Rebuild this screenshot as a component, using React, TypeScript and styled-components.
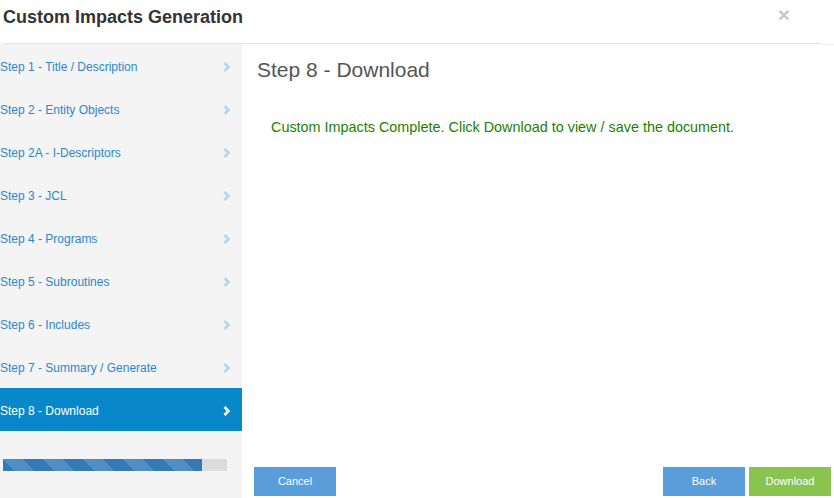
import React from "react";
import styled, { createGlobalStyle } from "styled-components";

const Global = createGlobalStyle`
  html, body { margin: 0; padding: 0; background: #fff; }
  body { font-family: "Liberation Sans", Arial, sans-serif; }
  * { box-sizing: border-box; }
`;

const Modal = styled.div`
  width: 834px;
  height: 498px;
  display: flex;
  flex-direction: column;
  background: #fff;
  overflow: hidden;
`;

const Header = styled.div`
  height: 44px;
  display: flex;
  align-items: flex-start;
  justify-content: space-between;
  position: relative;
  &::before {
    content: "";
    position: absolute;
    left: 3px;
    right: 13px;
    top: 43px;
    height: 1px;
    background: #e2e2e2;
  }
  &::after {
    content: "";
    position: absolute;
    left: 821px;
    right: 0;
    top: 44px;
    height: 1px;
    background: #eeeeee;
  }
`;

const Title = styled.h1`
  margin: 0;
  padding: 6px 0 0 3px;
  font-size: 18px;
  line-height: 22px;
  font-weight: bold;
  color: #333;
`;

const Close = styled.span`
  margin: 4px 44px 0 0;
  font-size: 21px;
  line-height: 21px;
  font-weight: bold;
  color: #c8c8c8;
`;

const Body = styled.div`
  flex: 1;
  display: flex;
  min-height: 0;
`;

const Sidebar = styled.nav`
  width: 242px;
  background: #f4f4f4;
  display: flex;
  flex-direction: column;
`;

const StepItem = styled.div<{ $active?: boolean }>`
  height: 43px;
  display: flex;
  align-items: center;
  justify-content: space-between;
  padding: 2px 11px 0 0;
  font-size: 12px;
  color: ${(p) => (p.$active ? "#fff" : "#2a87cf")};
  background: ${(p) => (p.$active ? "#0888cb" : "transparent")};
`;

const Chevron = styled.svg<{ $active?: boolean }>`
  width: 8px;
  height: 10px;
  color: ${(p) => (p.$active ? "#ffffff" : "#b0d6ee")};
`;

const Progress = styled.div`
  margin: 28px 15px 0 3px;
  height: 12px;
  background: #dcdcdc;
`;

const ProgressFill = styled.div`
  height: 100%;
  background-color: #337ab7;
  background-image: linear-gradient(
    45deg,
    rgba(255, 255, 255, 0.15) 25%,
    transparent 25%,
    transparent 50%,
    rgba(255, 255, 255, 0.15) 50%,
    rgba(255, 255, 255, 0.15) 75%,
    transparent 75%,
    transparent
  );
  background-size: 40px 40px;
`;

const Main = styled.section`
  flex: 1;
  display: flex;
  flex-direction: column;
  padding: 14px 3px 2px 12px;
`;

const Heading = styled.h2`
  margin: 0 0 0 3px;
  font-size: 21px;
  line-height: 24px;
  font-weight: normal;
  color: #555;
`;

const Message = styled.p`
  margin: 36px 0 0 17px;
  font-size: 14.4px;
  line-height: 18px;
  color: #1c7f00;
`;

const Footer = styled.div`
  margin-top: auto;
  display: flex;
  gap: 4px;
`;

const Button = styled.button<{ $variant?: "primary" | "success" }>`
  width: 82px;
  height: 29px;
  border: none;
  padding: 0 0 2px;
  font-family: "Liberation Sans", Arial, sans-serif;
  font-size: 11px;
  color: #fff;
  background: ${(p) => (p.$variant === "success" ? "#8bc34f" : "#599ddb")};
  cursor: pointer;
`;

const Spacer = styled.div`
  flex: 1;
`;

const steps = [
  "Step 1 - Title / Description",
  "Step 2 - Entity Objects",
  "Step 2A - I-Descriptors",
  "Step 3 - JCL",
  "Step 4 - Programs",
  "Step 5 - Subroutines",
  "Step 6 - Includes",
  "Step 7 - Summary / Generate",
  "Step 8 - Download",
];

export default function App() {
  const progress = 89;
  return (
    <>
      <Global />
      <Modal>
        <Header>
          <Title>Custom Impacts Generation</Title>
          <Close>×</Close>
        </Header>
        <Body>
          <Sidebar>
            {steps.map((s, i) => {
              const active = i === steps.length - 1;
              return (
                <StepItem key={s} $active={active}>
                  <span>{s}</span>
                  <Chevron $active={active} viewBox="0 0 8 10">
                    <path d="M1.5 1 L5.5 5 L1.5 9" fill="none" stroke="currentColor" strokeWidth="2.6" strokeLinejoin="miter" />
                  </Chevron>
                </StepItem>
              );
            })}
            <Progress>
              <ProgressFill style={{ width: `${progress}%` }} />
            </Progress>
          </Sidebar>
          <Main>
            <Heading>Step 8 - Download</Heading>
            <Message>Custom Impacts Complete. Click Download to view / save the document.</Message>
            <Footer>
              <Button $variant="primary">Cancel</Button>
              <Spacer />
              <Button $variant="primary">Back</Button>
              <Button $variant="success">Download</Button>
            </Footer>
          </Main>
        </Body>
      </Modal>
    </>
  );
}
